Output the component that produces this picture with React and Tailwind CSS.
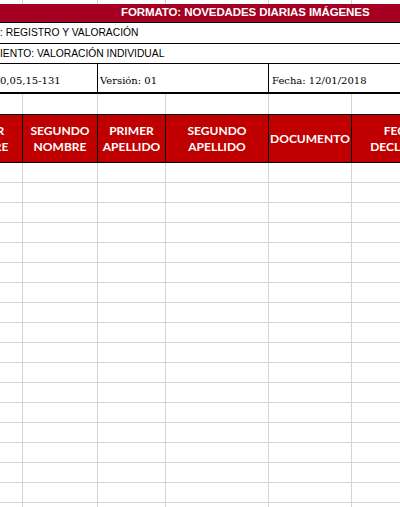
import React from 'react';

// column widths, first column starts off-screen (-58px)
const cols = ['w-[81px]', 'w-[75px]', 'w-[68px]', 'w-[103px]', 'w-[83px]', 'w-[122px]'];

const headers = [
  ['PRIMER', 'NOMBRE'],
  ['SEGUNDO', 'NOMBRE'],
  ['PRIMER', 'APELLIDO'],
  ['SEGUNDO', 'APELLIDO'],
  ['DOCUMENTO'],
  ['FECHA DE', 'DECLARACIÓN'],
];

const GridRow = ({ height, bottom }) => (
  <div className={`flex shrink-0 ${height} ${bottom}`}>
    {cols.map((w, i) => (
      <div key={i} className={`${w} shrink-0 border-r border-[#d4d4d4]`} />
    ))}
  </div>
);

export default function App() {
  const rows = Array.from({ length: 18 });

  return (
    <div className="w-[400px] h-[507px] overflow-hidden bg-white">
      <div className="ml-[-58px] w-[532px] flex flex-col">
        <GridRow height="h-[4px]" bottom="" />

        <div className="h-[19px] bg-[#a50021] border-b border-black flex items-center pl-[179px]">
          <span className="text-white font-bold text-[11.5px] tracking-[-0.1px] whitespace-nowrap font-['Liberation_Sans',Arial,sans-serif]">
            FORMATO: NOVEDADES DIARIAS IMÁGENES
          </span>
        </div>

        <div className="h-[21px] border-b border-black flex items-end pb-[3px] pl-[58px] text-[10.3px] text-black font-['Liberation_Sans',Arial,sans-serif]">
          <span className="flex justify-end w-0">
            <span className="whitespace-nowrap">PROCESO</span>
          </span>
          <span className="whitespace-nowrap">: REGISTRO Y VALORACIÓN</span>
        </div>

        <div className="h-[20px] border-b border-black flex items-end pb-[2px] pl-[58px] text-[10.3px] text-black font-['Liberation_Sans',Arial,sans-serif]">
          <span className="flex justify-end w-0">
            <span className="whitespace-nowrap">PROCEDIM</span>
          </span>
          <span className="whitespace-nowrap">IENTO: VALORACIÓN INDIVIDUAL</span>
        </div>

        <div className="h-[30px] border-b-2 border-black flex text-[10px] text-black font-['DejaVu_Serif',Cambria,serif]">
          <div className="w-[156px] shrink-0 border-r border-black flex items-end pb-[4px] pl-[58px]">
            <span className="flex justify-end w-0">
              <span className="whitespace-nowrap">Código: 13</span>
            </span>
            <span className="whitespace-nowrap">0,05,15-131</span>
          </div>
          <div className="w-[171px] shrink-0 border-r border-black flex items-end pb-[4px] pl-[2px]">
            Versión: 01
          </div>
          <div className="flex-1 flex items-end pb-[4px] pl-[3px] whitespace-nowrap">
            Fecha: 12/01/2018
          </div>
        </div>

        <GridRow height="h-[20px]" bottom="" />

        <div className="flex h-[49px] border-y border-black bg-[#c00000]">
          {headers.map((h, i) => (
            <div
              key={i}
              className={`${cols[i]} shrink-0 border-r border-black flex flex-col items-center justify-center text-white font-bold text-[12px] leading-[16px] font-['Lato','Open_Sans',sans-serif]`}
            >
              {h.map((t) => (
                <span key={t} className="whitespace-nowrap">{t}</span>
              ))}
            </div>
          ))}
        </div>

        {rows.map((_, i) => (
          <GridRow key={i} height="h-[20px]" bottom="border-b border-[#d4d4d4]" />
        ))}
      </div>
    </div>
  );
}
